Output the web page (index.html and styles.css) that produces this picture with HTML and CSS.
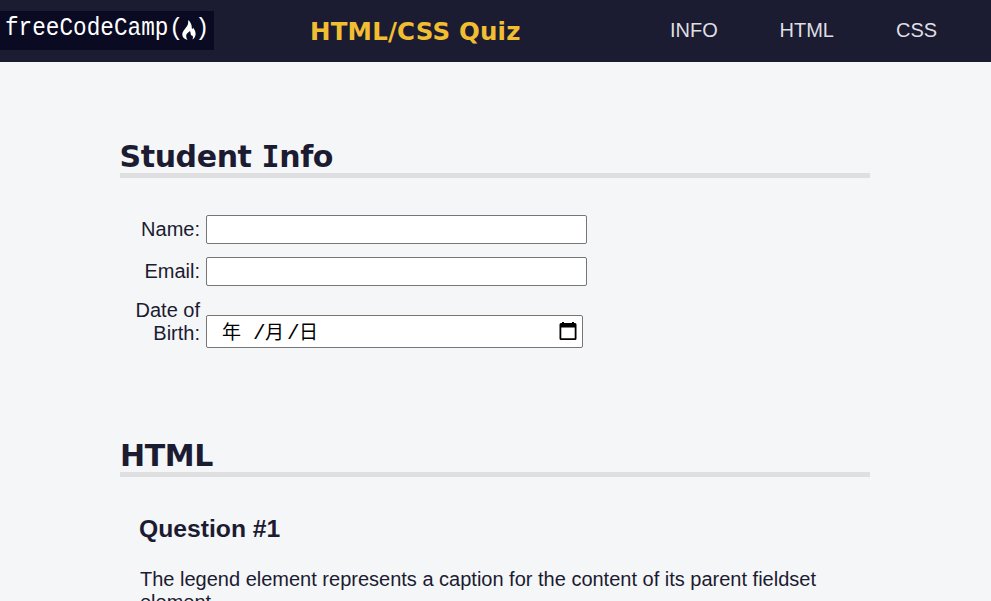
FILE: index.html
```html
<!DOCTYPE html>
<html lang="en">
<head>
<meta charset="utf-8">
<title>HTML/CSS Quiz</title>
<link rel="stylesheet" href="styles.css">
</head>
<body>
<header class="header">
  <div class="logo">
    <span class="logo-name">freeCodeCamp</span><span class="paren">(</span>
    <svg class="flame" viewBox="0 0 14 20" aria-hidden="true"><path d="M6.500 0C8.500 2 10 5 9.800 8C10 9.500 11 9 11 7.500C13 10 14 12.500 13.500 15C13 17.500 12 18.500 10.500 19.500C11.500 17 11 15.500 9.500 15.500C8.300 15 9 13 8 11C6 12.500 4 14 4.200 16C4.300 18 5 19 5.500 20C2 19 0 17 .3 14C.6 11 5 7 6 4C6.300 2.500 6 1 6.500 0Z" fill="#fff"/></svg>
    <span class="paren">)</span>
  </div>
  <h1 class="title">HTML/CSS Quiz</h1>
  <nav class="nav"><a class="nav-info" href="#info">INFO</a><a class="nav-html" href="#html">HTML</a><a class="nav-css" href="#css">CSS</a></nav>
</header>
<main class="main">
  <section id="info" class="info">
    <h2 class="heading heading-info">Student <span class="serif-i">I</span>nfo</h2>
    <div class="row"><label class="label" for="name">Name:</label><input class="field" id="name" type="text"></div>
    <div class="row"><label class="label" for="email">Email:</label><input class="field" id="email" type="email"></div>
    <div class="row row-date"><span class="label">Date of Birth:</span>
      <div class="field date"><span class="year">年</span><span class="slash">/</span><span class="month">月</span><span class="slash">/</span><span class="day">日</span>
        <svg class="calendar" viewBox="0 0 18 20" aria-hidden="true"><path d="M3 1h2v1h8V1h2v1h1a1.500 1.500 0 0 1 1.500 1.500v14a1.500 1.500 0 0 1-1.500 1.500H2a1.500 1.500 0 0 1-1.500-1.500v-14A1.500 1.500 0 0 1 2 2h1zM2.300 6.500v10.700h13.400V6.500z" fill="#000" fill-rule="evenodd"/></svg>
      </div>
    </div>
  </section>
  <section id="html">
    <h2 class="heading heading-html">HTML</h2>
    <article class="question">
      <h3 class="question-title">Question #1</h3>
      <p class="question-text">The legend element represents a caption for the content of its parent fieldset element.</p>
    </article>
  </section>
</main>
</body>
</html>
```
FILE: styles.css
```css
* { box-sizing: border-box; }
html { overflow: hidden; }
body {
  margin: 0;
  height: 601px;
  overflow: hidden;
  background: #f5f6f7;
  color: #1b1b32;
  font: 20px/23px "Liberation Sans", Arial, sans-serif;
}
.header {
  display: flex;
  height: 62px;
  background: #1b1b32;
}
.logo {
  display: flex;
  width: 214px;
  height: 39px;
  margin-top: 11px;
  padding-left: 5px;
  background: #0a0a23;
  color: #fff;
  font: 22.7px/36px "Liberation Mono", monospace;
}
.logo-name { width: 164px; transform: scaleY(1.1); }
.paren { width: 12px; font-size: 24px; line-height: 36px; }
.flame { width: 14px; height: 20px; margin-top: 9px; margin-left: 1px; margin-right: -1px; }
.title {
  width: 214px;
  margin: 17px 0 0 94px;
  padding-left: 2px;
  color: #f1be32;
  font: bold 24.5px/29px "DejaVu Sans", sans-serif;
  letter-spacing: .18px;
  white-space: nowrap;
}
.nav { display: flex; margin: 18px 0 0 148px; }
.nav a { color: #dfdfe2; text-decoration: none; line-height: 24px; }
.nav-info { width: 109.5px; }
.nav-html { width: 116.5px; }
.main { width: 750px; margin: 0 auto 0 120px; }
.heading {
  height: 40px;
  margin: 0;
  border-bottom: 5px solid #dfdfe2;
  font: bold 30px/37px "DejaVu Sans", sans-serif;
  letter-spacing: -.4px;
  white-space: nowrap;
}
.info { height: 375px; padding-top: 76px; }
.heading-info { margin-bottom: 37px; text-indent: -.5px; }
.serif-i { font-family: "DejaVu Sans Mono", monospace; }
.row { display: flex; height: 29px; margin-bottom: 13px; }
.label { width: 80px; margin: 3px 6px 0 0; text-align: right; }
.field {
  width: 381px;
  height: 29px;
  border: 1px solid #767676;
  border-radius: 2px;
  background: #fff;
  font-size: 16px;
}
.row-date { height: 49px; }
.row-date .label { margin-top: 0; }
.date {
  display: flex;
  width: 377px;
  height: 33px;
  margin-top: 16px;
  padding-left: 15px;
  color: #000;
  font: 19px/37px "Liberation Mono", "Noto Sans CJK TC", monospace;
}
.year { width: 31px; }
.slash { width: 12px; font-size: 21px; line-height: 35px; }
.month { width: 22px; }
.calendar { width: 18px; height: 20px; margin: 5px 5px 0 auto; }
.question { padding: 38px 20px 0; }
.question-title { margin: 0 0 25px -1px; font: bold 24.7px/28px "Liberation Sans", sans-serif; }
.question-text { margin: 0; }
```
